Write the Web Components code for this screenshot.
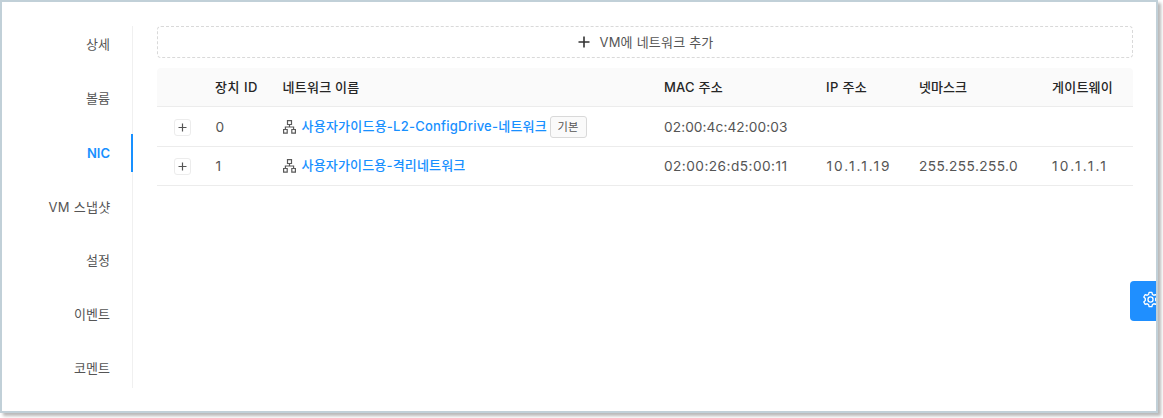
<!DOCTYPE html>
<html lang="ko">
<head>
<meta charset="utf-8">
<title>VM NIC</title>
<style>
html,body{margin:0;height:100%;background:#fff;overflow:hidden}
body{font-family:Inter,"Noto Sans CJK KR",sans-serif;font-size:13px;color:#555}
</style>
</head>
<body>
<app-frame>
  <side-tabs slot="nav">
    <side-tab hangul>상세</side-tab><side-tab hangul>볼륨</side-tab><side-tab active>NIC</side-tab><side-tab><ui-text w="62">VM 스냅샷</ui-text></side-tab><side-tab hangul>설정</side-tab><side-tab hangul>이벤트</side-tab><side-tab hangul>코멘트</side-tab>
  </side-tabs>
  <add-button><ui-text w="114">VM에 네트워크 추가</ui-text></add-button>
  <nic-table>
    <nic-row head>
      <ui-text slot="id" w="43">장치 ID</ui-text><ui-text slot="name" w="77">네트워크 이름</ui-text><ui-text slot="mac" w="59">MAC 주소</ui-text><ui-text slot="ip" w="41">IP 주소</ui-text><ui-text slot="mask" w="48">넷마스크</ui-text><ui-text slot="gw" w="61">게이트웨이</ui-text>
    </nic-row>
    <nic-row tall>
      <ui-text slot="id">0</ui-text><net-link slot="name"><ui-text w="245.5">사용자가이드용-L2-ConfigDrive-네트워크</ui-text><ui-tag slot="tag">기본</ui-tag></net-link><ui-text slot="mac" w="123.500">02:00:4c:42:00:03</ui-text>
    </nic-row>
    <nic-row>
      <ui-text slot="id">1</ui-text><net-link slot="name"><ui-text w="164">사용자가이드용-격리네트워크</ui-text></net-link><ui-text slot="mac" w="123.500">02:00:26:d5:00:11</ui-text><ui-text slot="ip" w="65">10.1.1.19</ui-text><ui-text slot="mask" w="99">255.255.255.0</ui-text><ui-text slot="gw" w="56">10.1.1.1</ui-text>
    </nic-row>
  </nic-table>
  <settings-handle slot="handle"></settings-handle>
</app-frame>
<script>
const define = (name, html, init) => customElements.define(name, class extends HTMLElement {
  constructor(){ super(); this.attachShadow({mode:'open'}).innerHTML = html; }
  connectedCallback(){ if(init) init(this); }
});

define('app-frame', `<style>
:host{display:block;box-sizing:border-box;position:relative;width:1158px;height:413px;border:2px solid #c1d0d8;background:#fff;box-shadow:3px 3px 3px rgba(0,0,0,.28)}
.clip{display:grid;grid-template-columns:131px 976px;column-gap:24px;height:100%;overflow:hidden;position:relative;padding-top:24px;box-sizing:border-box;align-items:start}
.handle{position:absolute;left:1128px;top:279px}
</style><div class="clip"><slot name="nav"></slot><main><slot></slot></main><div class="handle"><slot name="handle"></slot></div></div>`);

define('side-tabs', `<style>
:host{display:flex;flex-direction:column;gap:16px;box-sizing:border-box;height:362px;border-right:1px solid #f0f0f0}
</style><slot></slot>`);

define('side-tab', `<style>
:host{display:flex;align-items:center;justify-content:flex-end;height:38px;box-sizing:border-box;padding-right:21.5px;position:relative;white-space:nowrap;line-height:20px}
:host([hangul]){padding-bottom:2px;padding-right:22px}
:host([active]){color:#1890ff;font-weight:600;padding-right:22px}
:host([active])::after{content:"";position:absolute;right:-1px;top:0;width:2px;height:38px;background:#1890ff}
</style><slot></slot>`);

/* Text run whose letter spacing is tuned so that it takes the given width. */
define('ui-text', `<style>
:host{display:inline-block;white-space:nowrap;line-height:20px}
</style><span><slot></slot></span>`, el => {
  const w = parseFloat(el.getAttribute('w'));
  if(!w) return;
  requestAnimationFrame(() => {
    const now = el.getBoundingClientRect().width, n = el.textContent.length;
    el.style.letterSpacing = ((w - now) / n).toFixed(3) + 'px';
  });
});

define('add-button', `<style>
:host{display:flex;align-items:center;justify-content:center;gap:10px;box-sizing:border-box;height:32px;border:1px dashed #d9d9d9;border-radius:4px;padding-left:1px}
svg{display:block}
</style><svg width="12" height="12" viewBox="0 0 12 12"><path d="M6 .5v11M.5 6h11" stroke="#333" stroke-width="1.6"/></svg><slot></slot>`);

define('nic-table', `<style>:host{display:block;margin-top:10px;border-radius:4px 4px 0 0;overflow:hidden}</style><slot></slot>`);

define('nic-row', `<style>
:host{display:grid;grid-template-columns:58.5px 67px 381.500px 162.500px 92.500px 133px 81px;align-items:center;box-sizing:border-box;height:39px;border-bottom:1px solid #ececec;font-size:13.700px}
:host([tall]){height:40px}
:host([head]){grid-template-columns:58px 67.500px 381.500px 162px 93px 133px 81px;background:#fafafa;color:#262626;font-weight:500;font-size:13px}
:host([head]) .plus{visibility:hidden}
.plus{box-sizing:border-box;width:17px;height:17px;margin:1px 0 0 17px;border:1px solid #ececec;border-radius:3px;background:#fff;display:grid;place-items:center}
</style>
<div class="plus"><svg width="9" height="9" viewBox="0 0 9 9"><path d="M4.5 .5v8M.5 4.5h8" stroke="#555" stroke-width="1.2"/></svg></div>
<div><slot name="id"></slot></div><div><slot name="name"></slot></div><div><slot name="mac"></slot></div><div><slot name="ip"></slot></div><div><slot name="mask"></slot></div><div><slot name="gw"></slot></div>`);

define('net-link', `<style>
:host{display:flex;align-items:center;height:22px;font-size:13px}
svg{display:block;margin-right:6px}
.link{display:flex;height:22px;color:#1890ff;font-weight:500;margin-right:2.500px}
</style><svg width="13" height="14" viewBox="0 0 13 14" fill="none" stroke="#595959" stroke-width="1.2"><path d="M4.500 .6h4v3.900h-4zM.6 9.500h3.600v3.700H.6zM8.800 9.500h3.600v3.700H8.800zM6.500 4.500v2.500M2.400 9.500V7h8.200v2.500"/></svg><span class="link"><slot></slot></span><slot name="tag"></slot>`);

define('ui-tag', `<style>
:host{display:flex;align-items:center;justify-content:center;box-sizing:border-box;width:37px;height:22px;border:1px solid #d9d9d9;border-radius:3px;background:#fafafa;font-size:11.3px;line-height:20px;color:#555}
</style><slot></slot>`);

define('settings-handle', `<style>
:host{display:flex;align-items:center;box-sizing:border-box;width:40px;height:40px;padding-left:12px;background:#1f8fff;border-radius:4px 0 0 4px}
svg{display:block;margin-top:-3px}
</style><svg width="17" height="17" viewBox="0 0 18 18" fill="none" stroke="#fff" stroke-width="1.4" stroke-linejoin="round"><path d="M7.500 1.500h3l.5 2.100 1.500.9 2.100-.7 1.500 2.600-1.600 1.500v2.200l1.600 1.500-1.500 2.600-2.100-.7-1.500.9-.5 2.100h-3l-.5-2.100-1.500-.9-2.100.7-1.500-2.600 1.600-1.500V7.900L1.900 6.400l1.500-2.600 2.100.7 1.500-.9z"/><circle cx="9" cy="9" r="2.700"/></svg>`);
</script>
</body>
</html>
